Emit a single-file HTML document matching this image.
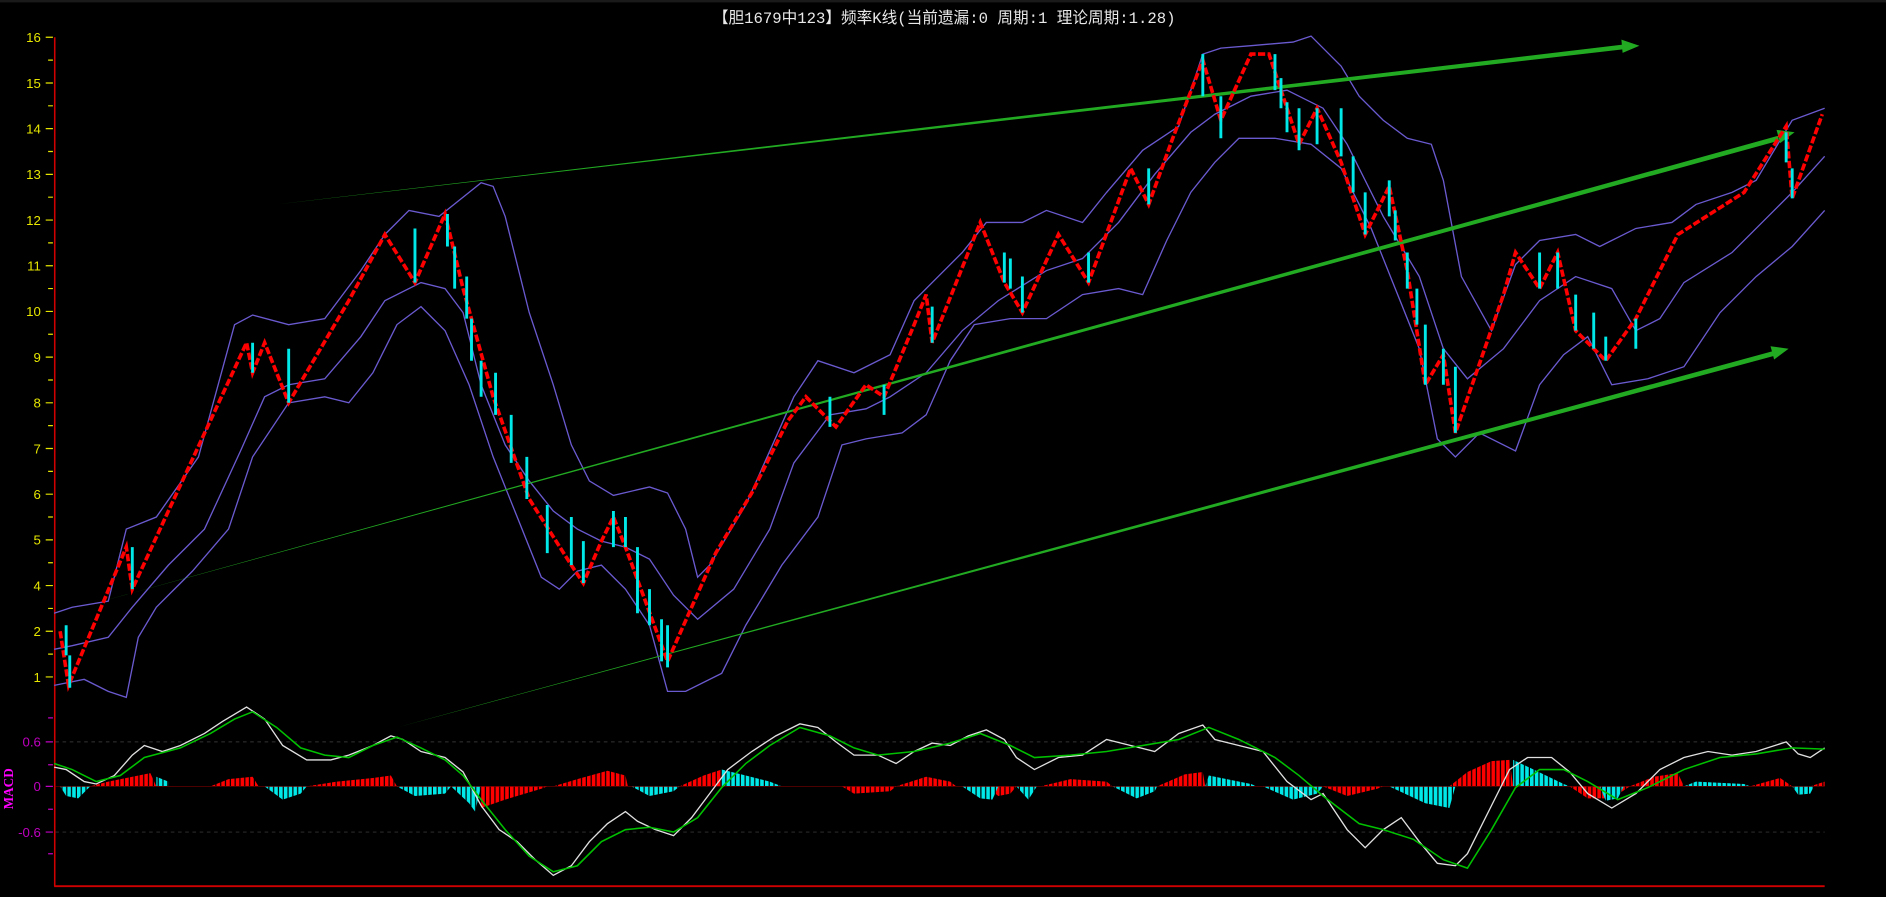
<!DOCTYPE html>
<html><head><meta charset="utf-8"><style>
html,body{margin:0;padding:0;background:#000;overflow:hidden}
svg{display:block}
</style></head><body>
<svg width="1886" height="897" viewBox="0 0 1568 746" preserveAspectRatio="none" xmlns="http://www.w3.org/2000/svg">
<defs>
<pattern id="gap" width="4" height="10" patternUnits="userSpaceOnUse"><rect x="3" y="0" width="1" height="10" fill="#000"/></pattern>
</defs>
<rect width="1568" height="746" fill="#000"/>
<rect width="1568" height="2" fill="#1a1a1a"/>
<text x="785" y="19" fill="#e8e8e8" font-family="'Liberation Mono','WenQuanYi Zen Hei','Noto Sans CJK SC',monospace" font-size="13" text-anchor="middle">【胆1679中123】频率K线(当前遗漏:0 周期:1 理论周期:1.28)</text>

<!-- axes -->
<line x1="45.5" y1="31" x2="45.5" y2="737" stroke="#d00000" stroke-width="1.3"/>
<line x1="45" y1="737" x2="1517" y2="737" stroke="#d00000" stroke-width="1.5"/>
<g fill="#e6e600" font-family="'Liberation Sans',sans-serif" font-size="11" text-anchor="end">
<text x="34" y="35">16</text><text x="34" y="73">15</text><text x="34" y="111">14</text><text x="34" y="149">13</text><text x="34" y="187">12</text><text x="34" y="225">11</text><text x="34" y="263">10</text><text x="34" y="301">9</text><text x="34" y="339">8</text><text x="34" y="377">7</text><text x="34" y="415">6</text><text x="34" y="453">5</text><text x="34" y="491">4</text><text x="34" y="529">2</text><text x="34" y="567">1</text>
</g>
<g stroke="#e6e600" stroke-width="1">
<path d="M38 31H44M40 50H44M38 69H44M40 88H44M38 107H44M40 126H44M38 145H44M40 164H44M38 183H44M40 202H44M38 221H44M40 240H44M38 259H44M40 278H44M38 297H44M40 316H44M38 335H44M40 354H44M38 373H44M40 392H44M38 411H44M40 430H44M38 449H44M40 468H44M38 487H44M40 506H44M38 525H44M40 544H44M38 563H44"/>
</g>
<g fill="#c000c0" font-family="'Liberation Sans',sans-serif" font-size="11" text-anchor="end">
<text x="34" y="621">0.6</text><text x="34" y="658">0</text><text x="34" y="696">-0.6</text>
</g>
<path d="M40 597H44M38 617H44M40 636H44M38 654H44M40 673H44M38 692H44M40 710H44" stroke="#c000c0"/>
<text transform="translate(11,656) rotate(-90)" fill="#ff00ff" font-family="'Liberation Serif',serif" font-weight="bold" font-size="11" text-anchor="middle">MACD</text>
<path d="M46 617H1517M46 692H1517" stroke="#333" stroke-dasharray="3 3" stroke-width="0.8"/>

<!-- bands -->
<g fill="none" stroke="#6a5ad0" stroke-width="1.1">
<path d="M45 510L60 505L90 500L105 440L130 430L165 380L195 270L210 262L240 270L270 265L300 225L320 195L340 175L365 180L390 160L400 152L410 155L420 180L440 260L460 320L475 370L490 400L510 412L540 405L555 410L570 440L580 480L590 470L620 420L660 330L680 300L710 310L740 295L760 250L780 230L800 210L820 185L850 185L870 175L900 185L920 160L950 125L980 105L1000 45L1015 40L1040 38L1075 35L1090 30L1115 55L1130 80L1150 100L1170 115L1190 120L1200 150L1215 230L1240 275L1260 220L1280 200L1310 195L1330 205L1360 190L1390 185L1410 170L1440 160L1460 150L1490 100L1517 90"/>
<path d="M45 540L60 537L90 530L110 505L140 470L170 440L200 375L220 330L240 320L270 315L300 280L320 250L350 235L370 240L385 260L400 320L420 370L440 400L460 425L480 440L500 450L520 455L540 465L560 495L580 515L610 490L640 440L660 385L690 345L720 340L740 330L770 310L800 275L830 250L870 225L900 215L930 185L960 145L990 110L1010 95L1040 80L1070 75L1100 90L1120 120L1150 180L1180 230L1200 290L1220 315L1250 290L1280 250L1310 230L1340 240L1360 275L1380 265L1400 235L1440 210L1470 180L1490 160L1517 130"/>
<path d="M45 570L70 565L90 575L105 580L115 530L130 505L160 475L190 440L210 380L240 335L270 330L290 335L310 310L330 270L350 255L370 275L390 320L410 380L430 430L450 480L465 490L480 475L500 470L520 490L540 520L555 575L570 575L600 560L620 520L650 470L680 430L700 370L720 365L750 360L770 345L790 300L810 270L840 265L870 265L900 245L930 240L950 245L970 200L990 160L1010 135L1030 115L1060 115L1090 120L1115 140L1140 190L1160 240L1180 290L1195 365L1210 380L1230 360L1260 375L1280 320L1300 295L1320 280L1340 320L1370 315L1400 305L1430 260L1460 230L1490 205L1517 175"/>
</g>

<!-- trend lines -->
<polygon points="230,170 1350,37 1350,41" fill="#22aa22"/>
<polygon points="1363,38 1348,33 1349,44" fill="#22aa22"/>
<polygon points="85,500 1478,113 1479,117" fill="#22aa22"/>
<polygon points="1492,110 1477,108 1480,119" fill="#22aa22"/>
<polygon points="330,605 1474,292 1475,296" fill="#22aa22"/>
<polygon points="1487,290 1472,288 1475,299" fill="#22aa22"/>

<!-- K line: red renko up -->
<path fill="none" stroke="#ff0000" stroke-width="3" stroke-dasharray="6 2" d="M50 525L57 570L105 455L110 490L140 425L205 285L210 310L220 285L240 335L290 250L320 195L345 235L370 178L385 240L410 330L440 415L475 470L485 485L500 450L510 430L520 455L555 550L595 460L625 410L655 350L670 330L695 355L720 320L735 330L760 270L770 245L775 285L815 185L835 235L850 260L880 195L905 235L940 140L955 170L975 115L1000 50L1015 100L1040 45L1055 45L1080 120L1095 90L1115 135L1135 195L1155 155L1170 225L1185 320L1200 295L1210 360L1250 245L1260 210L1280 240L1295 210L1310 275L1335 300L1360 265L1395 195L1450 160L1485 105L1490 165L1515 95"/>
<path fill="none" stroke="#00e8e8" stroke-width="2.4" d="M55 520V545M58 545V572M110 455V490M210 285V310M240 290V335M345 190V235M372 178V205M378 205V240M388 230V265M392 265V300M400 300V330M412 310V345M425 345V385M438 380V415M455 420V460M475 430V470M485 450V485M510 425V455M520 430V455M530 455V510M540 490V520M550 515V550M555 520V555M690 330V355M735 320V345M775 255V285M835 210V235M840 215V240M850 230V260M905 210V235M955 140V170M1000 45V80M1015 80V115M1060 45V75M1065 65V90M1070 85V110M1080 90V125M1095 90V120M1115 90V130M1125 130V160M1135 160V195M1155 150V180M1160 175V200M1170 210V240M1178 240V270M1185 270V320M1200 290V320M1210 305V360M1280 210V240M1295 210V240M1310 245V275M1325 260V290M1335 280V300M1360 265V290M1485 110V135M1490 140V165"/>

<!-- MACD histogram -->
<g fill="#ff0000">
<polygon points="75,654 90,650 110,646 125,643 130,654"/>
<polygon points="175,654 190,648 210,646 215,654"/>
<polygon points="255,654 280,650 310,647 325,645 330,654"/>
<polygon points="400,654 400,672 420,665 450,656 455,654"/>
<polygon points="460,654 480,648 505,641 520,645 522,654"/>
<polygon points="565,654 585,645 600,640 600,654"/>
<polygon points="700,654 710,660 740,658 745,654"/>
<polygon points="745,654 770,646 790,650 795,654"/>
<polygon points="865,654 890,648 920,650 925,654"/>
<polygon points="962,654 985,644 1000,642 1002,654"/>
<polygon points="1100,654 1120,662 1145,656 1150,654"/>
<polygon points="1205,654 1220,642 1240,633 1255,632 1258,654"/>
<polygon points="1305,654 1320,664 1340,664 1355,654"/>
<polygon points="1355,654 1375,646 1395,643 1400,654"/>
<polygon points="1455,654 1480,647 1490,654"/>
<polygon points="1505,654 1517,650 1517,654"/>
<polygon points="820,654 830,662 840,660 845,654"/>
</g>
<g fill="#00e8e8">
<polygon points="50,654 55,662 65,664 75,654"/>
<polygon points="130,654 130,646 140,650 140,654"/>
<polygon points="220,654 235,665 250,660 255,654"/>
<polygon points="330,654 345,662 370,660 375,654"/>
<polygon points="375,654 390,668 395,675 400,654"/>
<polygon points="525,654 540,662 560,658 565,654"/>
<polygon points="600,654 600,640 620,645 640,650 650,654"/>
<polygon points="800,654 815,664 825,665 830,654"/>
<polygon points="845,654 855,665 862,654"/>
<polygon points="925,654 945,664 960,658 962,654"/>
<polygon points="1002,654 1005,645 1040,652 1045,654"/>
<polygon points="1050,654 1075,665 1095,660 1100,654"/>
<polygon points="1155,654 1185,668 1205,672 1210,654"/>
<polygon points="1258,654 1258,632 1275,640 1300,652 1305,654"/>
<polygon points="1330,654 1335,666 1345,664 1350,654"/>
<polygon points="1400,654 1410,650 1450,652 1455,654"/>
<polygon points="1490,654 1495,661 1505,660 1508,654"/>
</g>
<rect x="45" y="625" width="1475" height="60" fill="url(#gap)"/>
<line x1="46" y1="654" x2="1517" y2="654" stroke="#600" stroke-width="0.6"/>

<!-- MACD lines -->
<path fill="none" stroke="#e0e0e0" stroke-width="1.1" d="M45 638L55 640L70 650L80 652L95 645L110 628L120 620L135 625L150 620L170 610L185 600L205 588L220 598L235 620L255 632L275 632L290 628L310 620L325 612L335 615L350 625L370 630L385 642L400 670L415 690L430 700L445 715L460 728L475 720L490 700L505 685L520 675L530 683L545 690L560 695L575 680L590 660L605 640L625 625L645 612L665 602L680 605L695 617L710 628L730 628L745 635L760 625L775 618L790 620L805 612L820 607L835 615L845 630L860 640L880 630L900 628L920 615L940 620L960 625L980 610L1000 603L1010 615L1030 620L1050 625L1070 650L1090 665L1100 660L1110 675L1120 690L1135 705L1150 690L1165 680L1180 700L1195 718L1210 720L1220 710L1240 670L1255 640L1270 630L1290 630L1305 642L1320 660L1340 672L1360 660L1380 640L1400 630L1420 625L1440 628L1460 625L1485 617L1495 627L1505 630L1517 622"/>
<path fill="none" stroke="#00c000" stroke-width="1.3" d="M45 635L60 640L80 650L100 645L120 630L150 622L175 610L195 598L210 592L230 605L250 622L270 628L290 630L310 620L330 613L350 622L370 632L385 645L400 665L420 690L440 712L460 725L480 720L500 700L520 690L540 688L560 692L580 680L600 655L620 635L640 620L665 605L690 612L710 622L730 628L760 625L790 618L815 610L840 620L860 630L890 628L920 625L950 620L980 615L1005 605L1030 615L1060 630L1080 645L1100 662L1130 685L1150 690L1175 698L1200 715L1220 722L1240 690L1260 655L1280 640L1300 640L1320 650L1345 665L1370 655L1400 640L1430 630L1460 627L1490 622L1517 623"/>
</svg>
</body></html>
